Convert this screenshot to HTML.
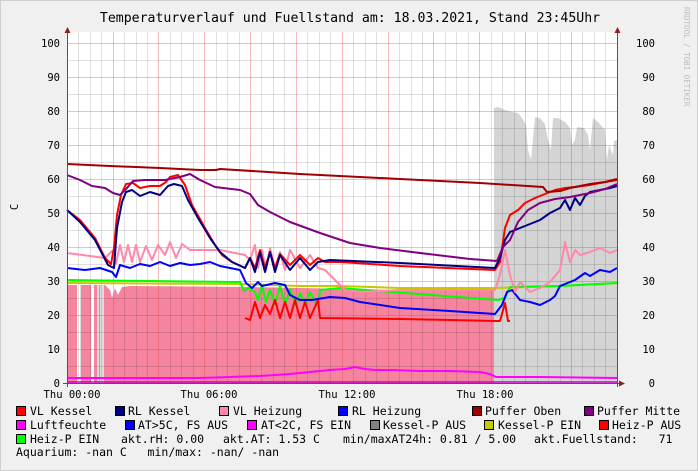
<!DOCTYPE html>
<html><head><meta charset="utf-8"><style>
html,body{margin:0;padding:0;}
body{width:698px;height:471px;overflow:hidden;background:#f0f0f0;}
svg{display:block;font-family:"DejaVu Sans Mono","Liberation Mono",monospace;}
.pre text{white-space:pre;}
</style></head><body>
<svg width="698" height="471" viewBox="0 0 698 471" xmlns="http://www.w3.org/2000/svg">
<rect x="0" y="0" width="698" height="471" fill="#f0f0f0" stroke="#cfcfcf" stroke-width="2"/>
<text x="350" y="22" font-size="13.2" text-anchor="middle" fill="#000">Temperaturverlauf und Fuellstand am: 18.03.2021, Stand 23:45Uhr</text>
<text transform="translate(684,7) rotate(90)" font-size="7.5" fill="#bdbdbd">RRDTOOL / TOBI OETIKER</text>
<rect x="67" y="32" width="550" height="351" fill="#fff"/>
<polygon fill="#d4d4d4" points="494,383 494,108 498,107 505,110 512,112 518,113 522,118 526,125 528,150 531,160 535,117 540,118 545,124 548,140 551,150 553,118 558,118 565,122 570,128 572,145 575,140 577,127 584,128 588,135 590,150 593,118 598,122 605,130 607,160 609,145 611,150 613,155 614,141 617,140 617,383"/>
<polygon fill="#f5859f" points="67,383 67,285 105,285 110,290 112,298 115,288 118,295 122,287 130,286 250,287 300,288 400,290 494,290 494,383"/>
<rect x="77" y="285" width="3" height="98" fill="#fff"/><rect x="80" y="285" width="1" height="98" fill="#ddd"/>
<rect x="91" y="285" width="3" height="98" fill="#fff"/><rect x="97" y="285" width="2" height="98" fill="#ddd"/><rect x="100" y="285" width="4" height="98" fill="#ddd"/>
<g stroke="#000" stroke-opacity="0.12" stroke-width="1">
<path d="M67.5 366.5H617M67.5 332.5H617M67.5 298.5H617M67.5 264.5H617M67.5 230.5H617M67.5 196.5H617M67.5 162.5H617M67.5 128.5H617M67.5 94.5H617M67.5 60.5H617"/>
<path d="M78.5 32V383M90.5 32V383M101.5 32V383M124.5 32V383M136.5 32V383M147.5 32V383M170.5 32V383M181.5 32V383M193.5 32V383M216.5 32V383M227.5 32V383M239.5 32V383M261.5 32V383M273.5 32V383M284.5 32V383M307.5 32V383M319.5 32V383M330.5 32V383M353.5 32V383M365.5 32V383M376.5 32V383M399.5 32V383M411.5 32V383M422.5 32V383M445.5 32V383M456.5 32V383M468.5 32V383M491.5 32V383M502.5 32V383M514.5 32V383M537.5 32V383M548.5 32V383M560.5 32V383M582.5 32V383M594.5 32V383M605.5 32V383"/>
</g>
<g stroke="#e04040" stroke-opacity="0.35" stroke-width="1">
<path d="M67.5 349.5H617M67.5 315.5H617M67.5 281.5H617M67.5 247.5H617M67.5 213.5H617M67.5 179.5H617M67.5 145.5H617M67.5 111.5H617M67.5 77.5H617M67.5 43.5H617"/>
<path d="M113.5 32V383M158.5 32V383M204.5 32V383M250.5 32V383M296.5 32V383M342.5 32V383M388.5 32V383M433.5 32V383M479.5 32V383M525.5 32V383M571.5 32V383M617.5 32V383"/>
</g>
<g fill="none" stroke-width="2" stroke-linejoin="round">
<polyline stroke="#ff00ff" points="67,378 120,378 200,378 230,377 260,376 290,374 310,372 330,370 345,369 355,367 365,369 375,370 390,370 420,371 450,371 480,372 490,374 496,377 540,377 617,378"/>
<polyline stroke="#c8c800" points="67,283 240,284 300,286 340,286 400,288 495,288 560,286 617,283"/>
<polyline stroke="#00ff00" points="67,280 235,282 240,282 244,291 248,288 255,292 258,300 262,285 266,302 270,290 275,304 280,286 285,305 290,289 296,306 300,293 305,305 310,292 318,307 320,290 340,288 498,300 505,298 510,287 560,286 617,283"/>
<polyline stroke="#ff0000" points="245,318 250,320 255,302 260,318 265,305 270,314 275,300 280,318 285,302 290,318 295,300 300,318 305,302 310,318 318,300 320,318 400,319 450,320 495,321 500,321 505,303 508,321 510,321"/>
<polyline stroke="#0000ff" points="67,268 85,270 100,268 112,272 116,277 120,265 130,268 140,264 150,266 160,262 170,266 180,263 190,265 200,264 210,262 220,266 230,268 240,270 246,283 252,288 258,282 262,286 275,283 285,285 290,295 300,300 312,300 330,297 345,298 360,302 400,308 450,311 495,314 502,305 507,292 512,290 520,300 530,302 540,305 550,300 555,296 560,286 575,280 585,273 590,276 600,270 610,272 617,268"/>
<polyline stroke="#ff88aa" points="67,253 90,256 105,258 112,251 116,263 120,245 124,262 128,245 132,262 136,245 140,262 146,246 152,260 158,245 165,255 170,242 176,258 182,244 190,250 210,250 220,250 245,255 250,260 255,245 258,268 262,250 266,270 270,248 275,268 280,252 285,270 290,250 300,268 310,255 318,268 325,270 335,280 345,290 360,292 400,290 495,290 500,275 505,250 510,275 515,292 520,282 530,292 540,288 550,282 560,270 565,242 570,262 575,250 580,255 590,252 600,248 610,253 617,250"/>
<polyline stroke="#ff0000" points="67,210 80,220 95,238 105,258 111,264 114,248 117,215 121,195 126,184 133,183 140,188 150,186 160,186 166,182 170,177 178,175 185,185 192,205 205,228 215,245 222,255 232,262 245,268 250,258 255,268 260,250 265,268 270,252 275,268 280,254 290,265 300,255 310,265 318,258 325,262 340,262 400,266 495,270 500,262 505,228 510,215 518,210 525,203 535,198 545,194 555,190 565,188 575,187 590,185 600,183 617,180"/>
<polyline stroke="#000080" points="67,210 80,222 95,240 108,265 114,268 117,228 122,202 126,192 132,190 140,196 150,192 160,195 168,186 174,184 182,186 188,200 198,218 210,238 220,252 232,262 245,268 250,258 255,272 260,252 265,272 270,252 275,272 280,255 290,270 300,258 310,270 318,262 330,260 400,263 495,268 500,258 505,240 510,232 520,228 530,224 540,220 550,213 560,208 565,200 570,210 575,198 580,205 585,196 590,192 600,190 610,188 617,186"/>
<polyline stroke="#800080" points="67,175 80,180 92,186 105,188 113,193 120,195 127,188 133,181 145,180 165,180 180,177 190,174 200,180 215,187 240,190 250,194 258,205 270,212 290,222 320,233 350,243 380,248 420,253 470,259 497,261 503,247 510,240 518,222 528,210 540,203 555,199 570,197 590,193 605,189 617,184"/>
<polyline stroke="#a00000" points="67,164 110,166 160,168 200,170 216,170 220,169 300,174 400,179 480,183 543,187 547,192 560,191 570,188 590,184 605,182 617,179"/>
<line x1="67" y1="382" x2="617" y2="382" stroke="#cc00cc" stroke-width="1.5"/>
</g>
<line x1="67.5" y1="30" x2="67.5" y2="387" stroke="#555" stroke-width="1"/>
<polygon points="67.5,27 64.5,33 70.5,33" fill="#902020"/>
<line x1="63" y1="383.5" x2="621" y2="383.5" stroke="#555" stroke-width="1"/>
<polygon points="625,383.5 619,380.5 619,386.5" fill="#902020"/>
<line x1="617.5" y1="32" x2="617.5" y2="387" stroke="#555" stroke-width="1"/>
<polygon points="617.5,27 614.5,33 620.5,33" fill="#902020"/>
<g font-size="10.5" fill="#000" text-anchor="end">
<text x="60" y="47">100</text><text x="60" y="81">90</text><text x="60" y="115">80</text><text x="60" y="149">70</text><text x="60" y="183">60</text><text x="60" y="217">50</text><text x="60" y="251">40</text><text x="60" y="285">30</text><text x="60" y="319">20</text><text x="60" y="353">10</text><text x="60" y="387">0</text>
<text x="655" y="47">100</text><text x="655" y="81">90</text><text x="655" y="115">80</text><text x="655" y="149">70</text><text x="655" y="183">60</text><text x="655" y="217">50</text><text x="655" y="251">40</text><text x="655" y="285">30</text><text x="655" y="319">20</text><text x="655" y="353">10</text><text x="655" y="387">0</text>
</g>
<text transform="translate(18,207) rotate(-90)" font-size="10.5" text-anchor="middle">C</text>
<g font-size="10.5" text-anchor="middle">
<text x="72" y="398">Thu 00:00</text><text x="209" y="398">Thu 06:00</text><text x="347" y="398">Thu 12:00</text><text x="485" y="398">Thu 18:00</text>
</g>
<g stroke="#000" stroke-width="1">
<rect x="16.5" y="406.5" width="9" height="9" fill="#ff0000"/>
<rect x="115.5" y="406.5" width="9" height="9" fill="#000080"/>
<rect x="219.5" y="406.5" width="9" height="9" fill="#ff88aa"/>
<rect x="338.5" y="406.5" width="9" height="9" fill="#0000ff"/>
<rect x="472.5" y="406.5" width="9" height="9" fill="#a00000"/>
<rect x="584.5" y="406.5" width="9" height="9" fill="#800080"/>
<rect x="16.5" y="420.5" width="9" height="9" fill="#ff00ff"/>
<rect x="125.5" y="420.5" width="9" height="9" fill="#0000ff"/>
<rect x="247.5" y="420.5" width="9" height="9" fill="#ff00ff"/>
<rect x="370.5" y="420.5" width="9" height="9" fill="#808080"/>
<rect x="484.5" y="420.5" width="9" height="9" fill="#c8c800"/>
<rect x="599.5" y="420.5" width="9" height="9" fill="#ff0000"/>
<rect x="16.5" y="434.5" width="9" height="9" fill="#00ff00"/>
</g>
<g class="pre" font-size="11.5" fill="#000">
<text x="30" y="415">VL Kessel</text><text x="128" y="415">RL Kessel</text><text x="233" y="415">VL Heizung</text><text x="352" y="415">RL Heizung</text><text x="485" y="415">Puffer Oben</text><text x="597" y="415">Puffer Mitte</text>
<text x="30" y="429">Luftfeuchte</text><text x="138" y="429">AT&gt;5C, FS AUS</text><text x="261" y="429">AT&lt;2C, FS EIN</text><text x="383" y="429">Kessel-P AUS</text><text x="498" y="429">Kessel-P EIN</text><text x="612" y="429">Heiz-P AUS</text>
<text x="30" y="443">Heiz-P EIN</text><text x="121" y="443">akt.rH: 0.00</text><text x="223" y="443">akt.AT: 1.53 C</text><text x="343" y="443">min/maxAT24h: 0.81 / 5.00</text><text x="534" y="443">akt.Fuellstand:   71</text>
<text x="16" y="456">Aquarium: -nan C   min/max: -nan/ -nan</text>
</g>
</svg>
</body></html>
